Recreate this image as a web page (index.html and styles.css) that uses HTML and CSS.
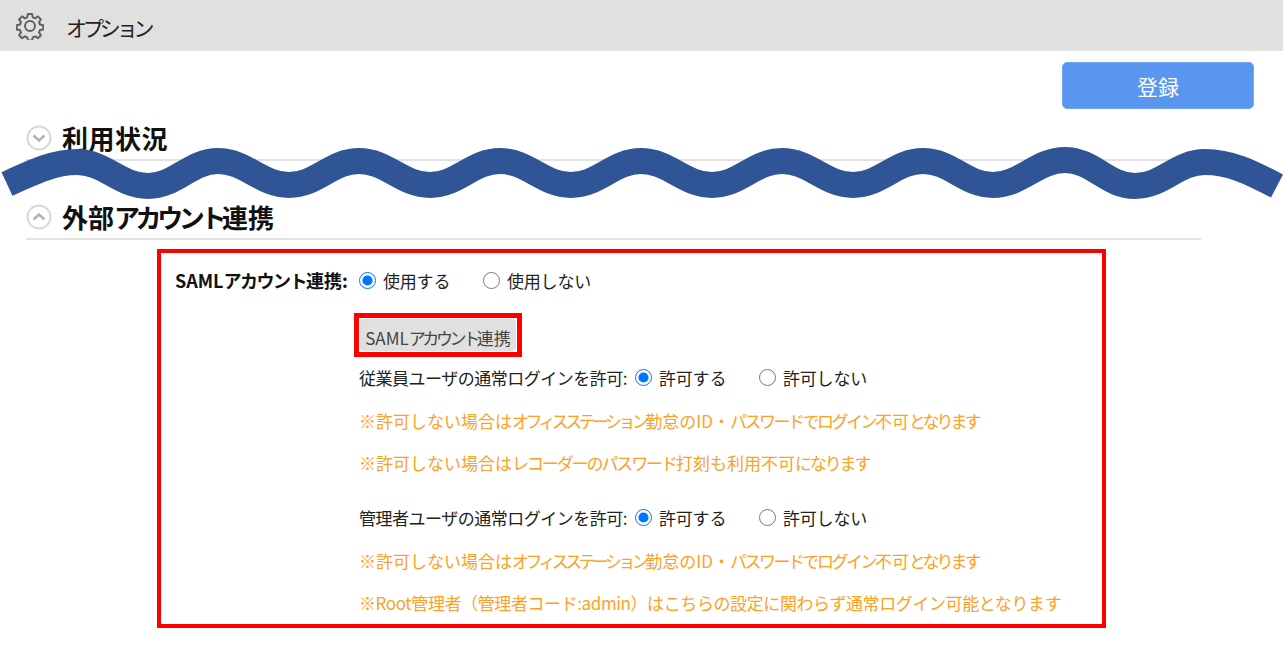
FILE: index.html
```html
<!DOCTYPE html>
<html lang="ja">
<head>
<meta charset="utf-8">
<title>オプション</title>
<link rel="stylesheet" href="styles.css">
</head>
<body>
<header class="topbar">
  <svg class="gear" viewBox="0 0 28 28" width="28" height="28" aria-hidden="true">
    <path d="M11.900 2h4.200l.7 3.300 2.300 1 2.800-1.900 3 3-1.900 2.800 1 2.300 3.300.7v4.200l-3.300.7-1 2.300 1.900 2.800-3 3-2.800-1.900-2.300 1-.7 3.300h-4.200l-.7-3.300-2.300-1-2.800 1.900-3-3 1.900-2.800-1-2.300-3.300-.7v-4.200l3.300-.7 1-2.300-1.900-2.800 3-3 2.800 1.900 2.300-1z" fill="none" stroke="#606060" stroke-width="2" stroke-linejoin="round"/>
    <circle cx="14" cy="14" r="5" fill="none" stroke="#606060" stroke-width="2"/>
  </svg>
  <span class="topbar-title">オプション</span>
</header>
<main class="content">
  <div class="actions"><button class="primary" type="button">登録</button></div>
  <section class="section section-collapsed">
    <h2 class="section-head">
      <svg class="toggle" viewBox="0 0 26 26" width="26" height="26" aria-hidden="true"><circle cx="13" cy="13" r="11.500" fill="#fff" stroke="#d8d8d8" stroke-width="2"/><path d="M7.500 10.500 13 15.500l5.500-5" fill="none" stroke="#b4b4b4" stroke-width="2.500"/></svg>
      <span class="head-kanji">利用状況</span>
    </h2>
  </section>
  <section class="section">
    <h2 class="section-head">
      <svg class="toggle" viewBox="0 0 26 26" width="26" height="26" aria-hidden="true"><circle cx="13" cy="13" r="11.500" fill="#fff" stroke="#d8d8d8" stroke-width="2"/><path d="M7.500 15.500 13 10.500l5.500 5" fill="none" stroke="#b4b4b4" stroke-width="2.500"/></svg>
      <span>外部<span class="head-kana">アカウント</span>連携</span>
    </h2>
    <div class="highlight">
      <div class="row saml-row">
        <span class="saml-label">SAML<span class="label-kana">アカウント</span>連携:</span>
        <label class="choice"><input type="radio" name="saml" checked>使用する</label>
        <label class="choice"><input type="radio" name="saml">使用しない</label>
      </div>
      <div class="detail">
        <div class="btn-frame"><button class="plain" type="button">SAML<span class="btn-kana">アカウント</span>連携</button></div>
        <div class="row login-row">
          <span class="row-label">従業員ユーザの通常ログインを許可:</span>
          <label class="choice"><input type="radio" name="emp" checked>許可する</label>
          <label class="choice"><input type="radio" name="emp">許可しない</label>
        </div>
        <p class="note">※許可しない場合は<span class="kana-xtight">オフィスステーション</span>勤怠のID・<span class="kana-tight">パスワードでログイン</span>不可<span class="kana-tail">となります</span></p>
        <p class="note">※許可しない場合は<span class="kana-mid">レコーダーのパスワード</span>打刻も利用不可<span class="kana-mid">になります</span></p>
        <div class="row login-row login-row-second">
          <span class="row-label">管理者ユーザの通常ログインを許可:</span>
          <label class="choice"><input type="radio" name="adm" checked>許可する</label>
          <label class="choice"><input type="radio" name="adm">許可しない</label>
        </div>
        <p class="note">※許可しない場合は<span class="kana-xtight">オフィスステーション</span>勤怠のID・<span class="kana-tight">パスワードでログイン</span>不可<span class="kana-tail">となります</span></p>
        <p class="note note-wide">※Root管理者（管理者コード:admin）はこちらの設定に関わらず通常ログイン可能となります</p>
      </div>
    </div>
  </section>
</main>
<svg class="wave" viewBox="0 0 1283 200" width="1283" height="200" aria-hidden="true">
  <path d="M7 184 C35 171 55 162 77 162 C105 162 120 186 148 186 C176 186 190 161 218 161 C246 161 261 185 289 185 C317 185 331 161 359 161 C387 161 402 185 430 185 C458 185 472 161 500 161 C528 161 543 185 571 185 C599 185 613 161 641 161 C669 161 684 185 712 185 C740 185 754 161 782 161 C810 161 825 185 853 185 C881 185 895 161 923 161 C951 161 965 185 993 185 C1021 185 1037 160 1065 160 C1093 160 1107 186 1135 186 C1163 186 1177 162 1205 162 C1230 162 1250 172 1277 186" fill="none" stroke="#2f5597" stroke-width="26"/>
</svg>
</body>
</html>
```
FILE: styles.css
```css
* { box-sizing: border-box; }
html, body { margin: 0; padding: 0; }
body {
  position: relative;
  width: 1283px;
  height: 651px;
  overflow: hidden;
  background: #fff;
  color: #222;
  font-family: "Noto Sans CJK JP", "Noto Sans", sans-serif;
  font-size: 17px;
}
.topbar {
  height: 51px;
  background: #e0e0de;
  display: flex;
  align-items: center;
  padding-left: 16px;
}
.gear { flex: none; }
.topbar-title {
  margin-left: 22px;
  padding-top: 2px;
  font-size: 21px;
  letter-spacing: -4.100px;
  color: #222;
}
.content { padding: 0 82px 0 26px; }
.actions {
  display: flex;
  justify-content: flex-end;
  padding-top: 11px;
  margin-right: -53px;
}
.primary {
  width: 192px;
  height: 47px;
  border: 1px solid #74a6f3;
  border-radius: 5px;
  background: #5896f0;
  color: #fff;
  font: inherit;
  font-size: 21px;
}
.section-head {
  margin: 0;
  display: flex;
  align-items: center;
  gap: 10px;
  height: 52px;
  padding-top: 7px;
  border-bottom: 2px solid #e2e2e2;
  font-size: 26px;
  font-weight: 700;
  color: #111;
}
.head-kanji { letter-spacing: 0.500px; }
.head-kana { letter-spacing: -4.400px; }
.section-collapsed { margin-bottom: 27px; }
.toggle { flex: none; }
.highlight {
  width: 949px;
  height: 379px;
  margin: 9px 0 0 131px;
  border: 4px solid #f00;
  padding: 10px 0 0 14px;
}
.row {
  display: flex;
  align-items: center;
  height: 34px;
}
.saml-label {
  width: 184px;
  font-size: 18px;
  font-weight: 700;
  color: #111;
}
.label-kana { letter-spacing: -1.500px; }
.choice {
  display: flex;
  align-items: center;
  width: 124px;
  letter-spacing: -0.200px;
  white-space: nowrap;
}
.choice input {
  width: 17px;
  height: 17px;
  margin: 0 7px 0 0;
  accent-color: #0075ff;
}
.detail { margin: 0 0 0 179px; padding-top: 16px; }
.btn-frame {
  width: 168px;
  height: 44px;
  border: 5px solid #f00;
}
.plain {
  display: block;
  width: 100%;
  height: 100%;
  margin: 0;
  padding: 5px 0 0;
  border: 1px solid #fff;
  border-radius: 5px;
  background: #e0e0e0;
  color: #444;
  font: inherit;
  white-space: nowrap;
}
.btn-kana { letter-spacing: -3.400px; }
.login-row { padding-left: 5px; margin-top: 3px; margin-bottom: 6px; }
.row-label {
  width: 276px;
  letter-spacing: -0.500px;
  white-space: nowrap;
}
.login-row-second { margin-top: 16px; }
.note {
  margin: 0;
  padding-left: 5px;
  height: 42px;
  line-height: 42px;
  color: #ffa024;
  white-space: nowrap;
}
.note-wide { letter-spacing: -0.400px; }
.kana-xtight { letter-spacing: -3.600px; }
.kana-tight { letter-spacing: -2.500px; }
.kana-tail { letter-spacing: -3px; }
.kana-mid { letter-spacing: -2.100px; }
.wave {
  position: absolute;
  left: 0;
  top: 0;
  pointer-events: none;
}
```
